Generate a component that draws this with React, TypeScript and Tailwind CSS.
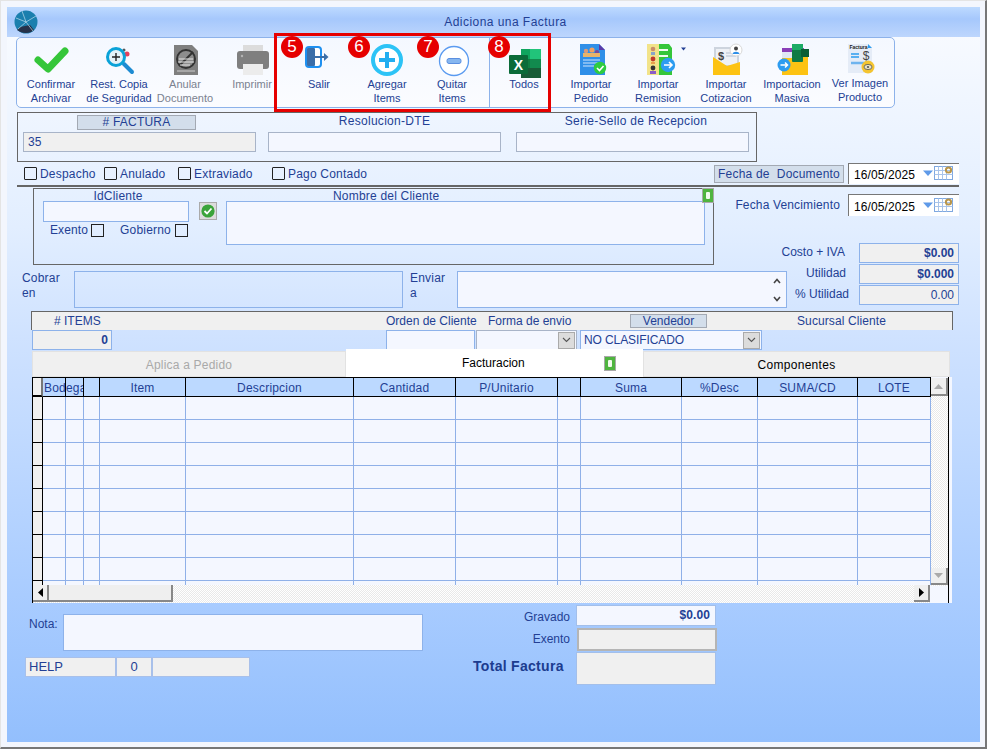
import React from "react";

const TXT = "text-[#233f94]";

function Item({ w, icon, children, up }: { w: string; icon: React.ReactNode; children: React.ReactNode; up?: boolean }) {
  return (
    <div className={`${w} shrink-0 flex flex-col items-center pt-[3px]`}>
      <div className="h-[36px] w-[40px]">{icon}</div>
      <div className={`${up ? "-mt-px" : ""} text-center text-[11px] leading-[14px] whitespace-nowrap ${TXT}`}>{children}</div>
    </div>
  );
}

function Ico({ cx, children }: { cx: number; children: React.ReactNode }) {
  return (
    <svg width="40" height="36" viewBox={`${cx - 20} 41 40 36`} className="overflow-visible">
      {children}
    </svg>
  );
}

function Check({ w, label }: { w: string; label: string }) {
  return (
    <div className={`${w} flex items-center`}>
      <span className="w-[13px] h-[13px] border border-[#222] rounded-[1px] shrink-0" />
      <span className={`ml-[3px] text-[12px] tracking-[0.2px] ${TXT}`}>{label}</span>
    </div>
  );
}

function DateBox({ h }: { h: string }) {
  return (
    <div className={`w-[111px] ${h} bg-white border-t border-l border-[#777] flex items-center pl-[5px] shrink-0`}>
      <span className="text-[12px] tracking-[0.1px] text-black w-[69px] mt-[2px]">16/05/2025</span>
      <svg width="33" height="16" viewBox="0 0 33 16" className="-mt-[2px]">
        <path d="M0 5.5H10L5 11Z" fill="#5f9ae8" />
        <rect x="11.5" y="1.5" width="18" height="13" fill="#fff" stroke="#7fa8e0" />
        <path d="M11.5 5.5H29.5M11.5 9.5H29.5M15.5 1.5V14.5M19.5 1.5V14.5M23.5 1.5V14.5" stroke="#a9c4ea" strokeWidth="1" />
        <circle cx="25.5" cy="5" r="2.6" fill="none" stroke="#b8954a" strokeWidth="2" />
      </svg>
    </div>
  );
}

function Chevron() {
  return (
    <span className="w-[17px] h-[17px] bg-[#dcdcdc] border border-[#aaa] flex items-center justify-center shrink-0">
      <svg width="9" height="6" viewBox="0 0 9 6"><path d="M1 1L4.5 4.5L8 1" fill="none" stroke="#555" strokeWidth="1.1" /></svg>
    </span>
  );
}

function MiniGreen() {
  return (
    <span className="w-[12px] h-[15px] bg-[#4fb43f] border border-[#a9a9a9] flex items-center justify-center">
      <span className="w-[4px] h-[7px] bg-[#f2fbee] rounded-[1px]" />
    </span>
  );
}

const HEADS = ["", "Bod", "ega", "", "Item", "Descripcion", "Cantidad", "P/Unitario", "", "Suma", "%Desc", "SUMA/CD", "LOTE"];

function Badge({ n, pos }: { n: string; pos: string }) {
  return (
    <span className={`absolute ${pos} top-[35px] w-[22px] h-[22px] rounded-full bg-[#e60000] text-white text-[17px] leading-[22px] text-center`}>{n}</span>
  );
}

export default function App() {
  return (
    <div className="relative w-[987px] h-[749px] overflow-hidden bg-[#f3f6fd] border-r-2 border-b-2 border-t border-l border-r-[#777] border-b-[#777] border-t-[#e4e4e4] border-l-[#e4e4e4] font-['Liberation_Sans',Arial,sans-serif]">
      <div className="absolute left-[6px] top-[6px] w-[973px] h-[735px] flex flex-col bg-[linear-gradient(180deg,#f7faff_4%,#e2eeff_30%,#cfe2ff_45%,#a9ccff_80%,#93bffd_100%)]">
        {/* title */}
        <div className="h-[30px] shrink-0 flex items-center justify-center pl-[24px] bg-[linear-gradient(180deg,#bddaff_0%,#a6c8fc_40%,#bdd6fd_100%)]">
          <span className={`text-[12px] tracking-[0.45px] ${TXT}`}>Adiciona una Factura</span>
        </div>

        {/* toolbar */}
        <div className="ml-[9px] w-[879px] h-[71px] shrink-0 flex border border-[#8db2ea] rounded-[5px] bg-[linear-gradient(180deg,#f4f8ff,#fbfcff)]">
          <Item w="w-[68px]" icon={<Ico cx={51}><path d="M38 60L48 69L65 51" fill="none" stroke="#35c63a" strokeWidth="7" strokeLinecap="round" strokeLinejoin="round" /></Ico>}>Confirmar<br />Archivar</Item>
          <Item w="w-[68px]" icon={<Ico cx={119}>
            <circle cx="127" cy="54" r="2.5" fill="#e4405a" /><circle cx="124" cy="50" r="1.5" fill="#555" />
            <path d="M124 64L132 72" stroke="#1d8bd2" strokeWidth="4" strokeLinecap="round" />
            <circle cx="116" cy="57" r="8.5" fill="#e4f2f8" stroke="#0aa2d8" strokeWidth="3" />
            <path d="M112 57H120M116 53V61" stroke="#222" strokeWidth="1.4" />
          </Ico>}>Rest. Copia<br />de Seguridad</Item>
          <Item w="w-[64px]" icon={<Ico cx={185}>
            <path d="M174 45H192L198 51V75H174Z" fill="#7f7f7f" />
            <circle cx="186" cy="59" r="9" fill="#8d8d8d" stroke="#333" strokeWidth="2" />
            <path d="M179 66L193 52" stroke="#333" strokeWidth="2" />
            <path d="M179 59H193M178 62H194M180 65H190" stroke="#e6e6e6" strokeWidth="1.2" />
            <path d="M177 71H195" stroke="#cfcfcf" strokeWidth="1" />
          </Ico>}><span className="text-[#7b8290]">Anular<br />Documento</span></Item>
          <Item w="w-[70px]" icon={<Ico cx={252}>
            <rect x="243" y="45" width="20" height="10" fill="#dcdcdc" />
            <rect x="237" y="51" width="32" height="18" rx="3" fill="#7f7f7f" />
            <rect x="243" y="64" width="20" height="11" fill="#ececec" />
            <circle cx="242" cy="56" r="1.2" fill="#b5b5b5" />
          </Ico>}><span className="text-[#7b8290]">Imprimir</span></Item>
          <Item w="w-[64px]" icon={<Ico cx={319}>
            <rect x="306" y="47" width="15" height="20" rx="3" fill="#fff" stroke="#1e90f0" strokeWidth="2" />
            <rect x="307" y="48" width="8" height="18" rx="1" fill="#3b6ea8" />
            <path d="M315 57H325" stroke="#3b6ea8" strokeWidth="2" />
            <path d="M324 53L328.5 57L324 61Z" fill="#3b6ea8" />
          </Ico>}>Salir</Item>
          <Item w="w-[72px]" icon={<Ico cx={387}>
            <circle cx="387" cy="60" r="14" fill="#fff" stroke="#2cc3f6" strokeWidth="4" />
            <path d="M379 60H395M387 52V68" stroke="#22aef0" strokeWidth="4" />
          </Ico>}>Agregar<br />Items</Item>
          <Item w="w-[58px]" icon={<Ico cx={452}>
            <circle cx="454" cy="61" r="14.5" fill="#fff" stroke="#5b9bf0" strokeWidth="1.3" />
            <rect x="447" y="58.5" width="14" height="5" rx="2" fill="#86b6ef" stroke="#5b8fe0" />
          </Ico>}>Quitar<br />Items</Item>
          <div className="w-[9px] shrink-0 border-r border-[#8db2ea]" />
          <Item w="w-[68px]" icon={<Ico cx={524}>
            <rect x="521" y="49" width="20" height="29" rx="1" fill="#107c41" />
            <rect x="530" y="49" width="11" height="10" fill="#21c47a" />
            <rect x="521" y="49" width="9" height="10" fill="#0fa55e" />
            <rect x="530" y="59" width="11" height="9" fill="#128a4e" />
            <rect x="521" y="68" width="20" height="10" fill="#185c37" />
            <rect x="509" y="55" width="19" height="19" rx="1" fill="#0b6b39" />
            <text x="518.5" y="69.5" textAnchor="middle" fontSize="14" fontWeight="700" fill="#fff">X</text>
          </Ico>}>Todos</Item>
          <Item w="w-[66px]" icon={<Ico cx={591}>
            <path d="M580 44H599L605 50V75H580Z" fill="#2f8fe8" />
            <path d="M599 44L605 50H599Z" fill="#5a3aa8" />
            <circle cx="586" cy="51" r="2.2" fill="#d99a7a" /><circle cx="592" cy="50" r="2.6" fill="#f0a060" /><circle cx="597" cy="52" r="2.1" fill="#7a4a9a" />
            <rect x="583" y="53" width="17" height="4" fill="#e7b46a" />
            <path d="M583 60H600M583 63H600M583 66H594" stroke="#cfe5fb" strokeWidth="1.2" />
            <circle cx="600" cy="68" r="6.2" fill="#2ecc40" />
            <path d="M597 68L599.5 70.5L603.5 66" fill="none" stroke="#fff" strokeWidth="1.6" />
          </Ico>}>Importar<br />Pedido</Item>
          <Item w="w-[68px]" icon={<Ico cx={658}>
            <rect x="647" y="44" width="12" height="31" fill="#f2e38a" />
            <path d="M659 44H669L672 48V75H659Z" fill="#35c63a" />
            <path d="M659 50H668M659 56H668" stroke="#f2fbf0" strokeWidth="2" />
            <circle cx="653" cy="49" r="2.3" fill="#c98d6a" /><rect x="651" y="52" width="4" height="3" fill="#8aa4c8" />
            <circle cx="653" cy="59" r="2.4" fill="#c0392b" /><rect x="651" y="62" width="4" height="2" fill="#e8a04a" />
            <circle cx="653" cy="68" r="2.4" fill="#333" /><rect x="650" y="71" width="6" height="3" fill="#8a5ac8" />
            <circle cx="668" cy="65" r="7.2" fill="#2d9cf0" />
            <path d="M664 65H672M669 62L672 65L669 68" fill="none" stroke="#fff" strokeWidth="1.6" />
            <path d="M681 47.5H686L683.5 50.5Z" fill="#233f94" />
          </Ico>}>Importar<br />Remision</Item>
          <Item w="w-[68px]" icon={<Ico cx={726}>
            <rect x="714" y="47" width="25" height="20" fill="#cdd4de" />
            <rect x="716" y="49" width="21" height="16" fill="#eef1f6" />
            <text x="721" y="60" textAnchor="middle" fontSize="11" fontWeight="700" fill="#444">$</text>
            <path d="M726 53H736M726 56H736" stroke="#b4bfd0" strokeWidth="1" />
            <circle cx="736" cy="50" r="6" fill="#fff" stroke="#d8d8d8" />
            <circle cx="736" cy="48.5" r="2" fill="#444" /><path d="M732.5 54C733 51 739 51 739.5 54Z" fill="#2d8fe8" />
            <path d="M713 57L727 66L740 62V75H713Z" fill="#fdc313" />
          </Ico>}>Importar<br />Cotizacion</Item>
          <Item w="w-[64px]" icon={<Ico cx={792}>
            <rect x="782" y="48" width="22" height="4" fill="#8a3fb8" />
            <rect x="782" y="52" width="18" height="6" fill="#dfe7f4" />
            <path d="M782 58H795L797 54H808V75H782Z" fill="#fdc313" />
            <rect x="792" y="44" width="11" height="18" rx="1" fill="#0f7a45" />
            <rect x="792" y="44" width="11" height="6" fill="#1dab66" />
            <rect x="801" y="49" width="8" height="8" fill="#0b5e34" />
            <circle cx="784" cy="65" r="6.5" fill="#2d9cf0" />
            <path d="M780.5 65H787.5M785 62.5L787.5 65L785 67.5" fill="none" stroke="#fff" strokeWidth="1.5" />
          </Ico>}>Importacion<br />Masiva</Item>
          <Item up w="w-[72px]" icon={<Ico cx={860}>
            <path d="M848 44H868L872 48V73H848Z" fill="#e5ecf7" />
            <path d="M868 44L872 48H868Z" fill="#2d9cf0" />
            <text x="849.5" y="48.5" fontSize="5" fontWeight="700" fill="#222">Factura</text>
            <path d="M851 54H859M851 57H859" stroke="#2d9cf0" strokeWidth="1.4" />
            <text x="866" y="60" textAnchor="middle" fontSize="12" fill="#444">$</text>
            <path d="M851 63H868" stroke="#6fb4ee" strokeWidth="2.5" />
            <circle cx="868" cy="67" r="6.5" fill="#f4c430" />
            <ellipse cx="868" cy="67" rx="4" ry="2.6" fill="#e9e3c4" stroke="#555" strokeWidth="0.8" />
            <circle cx="868" cy="67" r="1.1" fill="#555" />
          </Ico>}>Ver Imagen<br />Producto</Item>
        </div>

        {/* factura group */}
        <div className="ml-[10px] mt-[4px] w-[740px] h-[50px] shrink-0 border border-[#666] pl-[5px]">
          <div className="flex">
            <div className="w-[233px]">
              <div className="h-[19px] pt-[2px] pl-[54px] flex">
                <span className={`w-[119px] h-[15px] bg-[#d3deeb] border border-[#a3a9b3] text-center text-[12px] leading-[13px] tracking-[0.2px] ${TXT}`}># FACTURA</span>
              </div>
              <div className={`h-[20px] bg-[#f0f0f0] border border-[#a8b4c8] pl-[4px] text-[12px] leading-[18px] ${TXT}`}>35</div>
            </div>
            <div className="w-[233px] ml-[12px]">
              <div className={`h-[19px] text-center text-[12px] leading-[17px] tracking-[0.3px] ${TXT}`}>Resolucion-DTE</div>
              <div className="h-[20px] bg-[#f4f7ff] border border-[#a8b4c8]" />
            </div>
            <div className="w-[233px] ml-[15px]">
              <div className={`h-[19px] pl-[7px] text-center text-[12px] leading-[17px] tracking-[0.3px] ${TXT}`}>Serie-Sello de Recepcion</div>
              <div className="h-[20px] bg-[#f4f7ff] border border-[#a8b4c8]" />
            </div>
          </div>
        </div>

        {/* checks */}
        <div className="ml-[10px] w-[942px] h-[25px] shrink-0 border-b-2 border-[#666] flex items-center pl-[7px]">
          <Check w="w-[80px]" label="Despacho" />
          <Check w="w-[74px]" label="Anulado" />
          <Check w="w-[94px]" label="Extraviado" />
          <Check w="w-[442px]" label="Pago Contado" />
          <span className={`w-[130px] h-[18px] bg-[#d3deeb] border border-[#a3a9b3] text-center text-[12px] leading-[16px] tracking-[0.2px] ${TXT}`}>Fecha de&nbsp; Documento</span>
          <span className="ml-[4px]"><DateBox h="h-[21px]" /></span>
        </div>

        {/* client zone */}
        <div className="ml-[15px] mt-[1px] w-[937px] shrink-0 grid grid-cols-[692px_73px_172px] grid-rows-[55px_22px_6px_37px]">
          <div className="col-start-1 row-start-1 row-span-2 ml-[11px] h-[77px] border border-[#666] pl-[9px] flex relative">
            <div className="w-[146px] shrink-0">
              <div className={`h-[12px] pl-[4px] text-center text-[12px] leading-[14px] tracking-[0.2px] ${TXT}`}>IdCliente</div>
              <div className="h-[21px] bg-[#f4f7ff] border border-[#8db2ea]" />
              <div className="flex items-center h-[14px] mt-[1px] pl-[7px]">
                <span className={`w-[41px] text-[12px] tracking-[0.1px] ${TXT}`}>Exento</span>
                <span className="w-[13px] h-[13px] border border-[#222]" />
                <span className={`ml-[16px] w-[55px] text-[12px] tracking-[0.2px] ${TXT}`}>Gobierno</span>
                <span className="w-[13px] h-[13px] border border-[#222]" />
              </div>
            </div>
            <span className="ml-[10px] mt-[13px] w-[18px] h-[18px] bg-[#dcdcdc] border border-[#aaa] flex items-center justify-center shrink-0">
              <svg width="14" height="14" viewBox="0 0 14 14"><circle cx="7" cy="7" r="6.6" fill="#3aa43a" /><path d="M3.5 7L6 9.5L10.5 4.5" fill="none" stroke="#fff" strokeWidth="1.8" /></svg>
            </span>
            <div className="ml-[9px] w-[479px] shrink-0">
              <div className={`h-[12px] pl-[107px] text-left text-[12px] leading-[14px] tracking-[0.2px] ${TXT}`}>Nombre del Cliente</div>
              <div className="h-[44px] bg-[#f4f7ff] border border-[#8db2ea]" />
            </div>
            <span className="absolute right-[-1px] top-[-1px] flex"><MiniGreen /></span>
          </div>

          <div className="col-start-2 col-span-2 row-start-1 flex justify-end pt-[6px]">
            <span className={`text-[12px] leading-[22px] tracking-[0.15px] mr-[8px] ${TXT}`}>Fecha Vencimiento</span>
            <DateBox h="h-[22px]" />
          </div>

          <div className="col-start-3 row-start-2 row-span-3 flex flex-col gap-[1px]">
            {[["Costo + IVA", "$0.00", true, "pr-[14px]"], ["Utilidad", "$0.000", true, "pr-[13px]"], ["% Utilidad", "0.00", false, "pr-[10px]"]].map(([l, v, b, p]) => (
              <div key={l as string} className="flex h-[20px]">
                <span className={`w-[72px] ${p as string} flex justify-end whitespace-nowrap text-[12px] leading-[18px] ${TXT}`}>{l as string}</span>
                <span className={`w-[100px] bg-[#f0f0f0] border border-[#8db2ea] pr-[4px] text-right text-[12px] leading-[18px] ${b ? "font-bold" : ""} ${TXT}`}>{v as string}</span>
              </div>
            ))}
          </div>

          <div className="col-start-1 col-span-2 row-start-4 flex">
            <div className={`w-[52px] shrink-0 text-[12px] leading-[15px] tracking-[0.2px] ${TXT}`}>Cobrar<br />en</div>
            <div className="w-[329px] h-[37px] border border-[#8db2ea] shrink-0" />
            <div className={`ml-[7px] w-[47px] shrink-0 text-[12px] leading-[15px] tracking-[0.2px] ${TXT}`}>Enviar<br />a</div>
            <div className="w-[330px] h-[37px] bg-[#f4f7ff] border border-[#8db2ea] shrink-0 flex justify-end items-center pr-[5px]">
              <svg width="8" height="26" viewBox="0 0 8 26"><path d="M1 6L4 2.5L7 6M1 20L4 23.5L7 20" fill="none" stroke="#444" strokeWidth="1.6" /></svg>
            </div>
          </div>
        </div>

        {/* items header */}
        <div className={`ml-[24px] mt-[3px] w-[922px] h-[19px] shrink-0 bg-[#f0f0f0] border-t border-l border-r border-[#666] flex items-center text-[12px] ${TXT}`}>
          <span className="w-[354px] pl-[22px]"># ITEMS</span>
          <span className="w-[102px] whitespace-nowrap">Orden de Cliente</span>
          <span className="w-[142px] whitespace-nowrap">Forma de envio</span>
          <span className="w-[77px] h-[14px] bg-[#d3deeb] border border-[#a3a9b3] text-center leading-[12px]">Vendedor</span>
          <span className="ml-[90px] whitespace-nowrap tracking-[0.1px]">Sucursal Cliente</span>
        </div>

        {/* items row */}
        <div className="ml-[25px] h-[20px] shrink-0 flex">
          <span className={`w-[80px] bg-[#f0f0f0] border border-[#8db2ea] text-right pr-[3px] text-[12px] leading-[18px] font-bold ${TXT}`}>0</span>
          <span className="ml-[274px] w-[89px] bg-[#f4f7ff] border border-[#8db2ea]" />
          <span className="ml-[1px] w-[101px] bg-[#f4f7ff] border border-[#a8b4c8] flex justify-end items-center pr-px"><Chevron /></span>
          <span className={`ml-[3px] w-[182px] bg-[#f4f7ff] border border-[#8db2ea] flex items-center justify-between pl-[3px] pr-px text-[12px] tracking-[-0.1px] ${TXT}`}>NO CLASIFICADO<Chevron /></span>
        </div>

        {/* tabs */}
        <div className="ml-[25px] mt-[1px] h-[26px] shrink-0 flex">
          <div className="w-[314px] bg-[#f0f0f0] border border-[#e2e2e2] text-center text-[12px] leading-[26px] tracking-[0.2px] text-[#a9a9a9]">Aplica a Pedido</div>
          <div className="w-[297px] h-[28px] -mt-[2px] bg-white flex items-center text-[12px] text-black">
            <span className="ml-[116px] w-[142px]">Facturacion</span>
            <MiniGreen />
          </div>
          <div className="w-[307px] bg-[#f0f0f0] border border-[#e2e2e2] text-center text-[12px] leading-[26px] tracking-[0.3px] text-black">Componentes</div>
        </div>

        {/* table */}
        <div className="ml-[25px] w-[920px] h-[226px] shrink-0 bg-[#f4f7ff] flex flex-col">
          <div className="flex h-[208px] shrink-0">
            <div className="w-[899px] h-[208px] border-l border-t border-black overflow-hidden grid grid-cols-[10px_23px_18px_16px_86px_168px_102px_102px_23px_101px_76px_100px_73px] grid-rows-[19px_repeat(9,23px)] shrink-0">
              {HEADS.map((h, i) => (
                <div key={i} className={`${i === 0 ? "bg-[#f0f0f0] border-r-2 border-b-2 border-r-[#777] border-b-black" : "bg-[#bcd9ff] border-r border-b border-black"} overflow-hidden whitespace-nowrap text-[12px] leading-[20px] tracking-[0.2px] ${i === 1 ? "text-left pl-px" : i === 2 ? "text-left" : "text-center"} ${TXT}`}>{h}</div>
              ))}
              {Array.from({ length: 9 }).flatMap((_, r) =>
                HEADS.map((_, c) => (
                  <div key={`${r}-${c}`} className={c === 0 ? "bg-[#f0f0f0] border-r border-b border-black" : "border-r border-b border-[#8fb0e8]"} />
                ))
              )}
            </div>
            <div className="w-[17px] h-[208px] shrink-0 mt-px flex flex-col justify-between bg-[repeating-conic-gradient(#e9e9e9_0%_25%,#fff_0%_50%)] bg-[length:2px_2px]">
              <span className="h-[18px] bg-[#efefef] border-r-2 border-b-2 border-r-[#888] border-b-[#888] flex items-center justify-center">
                <svg width="9" height="5" viewBox="0 0 9 5"><path d="M0 5H9L4.5 0Z" fill="#aaa" /></svg>
              </span>
              <span className="h-[17px] mb-[1px] bg-[#efefef] border-r-2 border-b-2 border-r-[#888] border-b-[#888] flex items-center justify-center">
                <svg width="9" height="5" viewBox="0 0 9 5"><path d="M0 0H9L4.5 5Z" fill="#aaa" /></svg>
              </span>
            </div>
            <div className="w-px h-[226px] bg-black shrink-0" />
          </div>
          <div className="flex h-[18px] w-[898px] shrink-0 border-l border-black bg-[repeating-conic-gradient(#e9e9e9_0%_25%,#fff_0%_50%)] bg-[length:2px_2px]">
            <span className="w-[16px] h-[17px] bg-[#efefef] border-r-2 border-b-2 border-r-[#888] border-b-[#888] flex items-center justify-center">
              <svg width="5" height="9" viewBox="0 0 5 9"><path d="M5 0V9L0 4.5Z" fill="#000" /></svg>
            </span>
            <span className="w-[124px] h-[17px] bg-[#efefef] border-r-2 border-b-2 border-r-[#888] border-b-[#888]" />
            <span className="ml-auto w-[16px] h-[17px] bg-[#efefef] border-r-2 border-b-2 border-r-[#888] border-b-[#888] flex items-center justify-center">
              <svg width="5" height="9" viewBox="0 0 5 9"><path d="M0 0V9L5 4.5Z" fill="#000" /></svg>
            </span>
          </div>
        </div>

        {/* bottom */}
        <div className="ml-[18px] flex shrink-0">
          <div className="w-[448px] shrink-0 pt-[11px]">
            <div className="flex pl-[4px]">
              <span className={`w-[34px] text-[12px] leading-[20px] ${TXT}`}>Nota:</span>
              <span className="w-[360px] h-[37px] bg-[#f4f7ff] border border-[#8db2ea]" />
            </div>
            <div className={`mt-[6px] flex h-[20px] text-[13px] leading-[18px] ${TXT}`}>
              <span className="w-[91px] bg-[#f0f0f0] border border-[#a8c0ea] pl-[3px]">HELP</span>
              <span className="w-[36px] bg-[#f0f0f0] border border-[#a8c0ea] text-center">0</span>
              <span className="w-[98px] bg-[#f0f0f0] border border-[#a8c0ea]" />
            </div>
          </div>
          <div className={`pt-[2px] ${TXT}`}>
            <div className="flex h-[21px] items-center">
              <span className="w-[97px] text-right text-[12px] mt-[2px]">Gravado</span>
              <span className="ml-[6px] w-[140px] h-[21px] bg-[#f4f7ff] border border-[#a3bfea] text-right pr-[5px] text-[12px] leading-[19px] font-bold tracking-[0.1px]">$0.00</span>
            </div>
            <div className="flex h-[23px] mt-[2px] items-center">
              <span className="w-[97px] text-right text-[12px] -mt-[2px]">Exento</span>
              <span className="ml-[7px] w-[140px] h-[23px] bg-[#f0f0f0] border-2 border-[#b5b5b5]" />
            </div>
            <div className="flex h-[33px] mt-px">
              <span className="w-[91px] text-[14px] font-bold leading-[28px] whitespace-nowrap tracking-[0.3px] text-[#1c3c8f]">Total Factura</span>
              <span className="ml-[12px] w-[140px] h-[33px] bg-[#f0f0f0] border border-[#a3bfea]" />
            </div>
          </div>
        </div>
      </div>

      {/* logo over the title bar */}
      <svg className="absolute left-[13px] top-[9px]" width="24" height="24" viewBox="0 0 24 24">
        <circle cx="12" cy="12" r="11.5" fill="#1b7fae" />
        <path d="M3 20C8 24 16 24 20 20L16 15L6 17Z" fill="#26324a" />
        <path d="M2 8L12 12L22 6M12 12L19 21M12 12L4 19M8 1L12 12" fill="none" stroke="#bcdcec" strokeWidth="0.7" />
      </svg>

      {/* annotation over the toolbar */}
      <div className="absolute left-[273px] top-[32px] w-[277px] h-[79px] border-[3px] border-[#e60000]" />
      <Badge n="5" pos="left-[280px]" />
      <Badge n="6" pos="left-[347px]" />
      <Badge n="7" pos="left-[416px]" />
      <Badge n="8" pos="left-[487px]" />
    </div>
  );
}
